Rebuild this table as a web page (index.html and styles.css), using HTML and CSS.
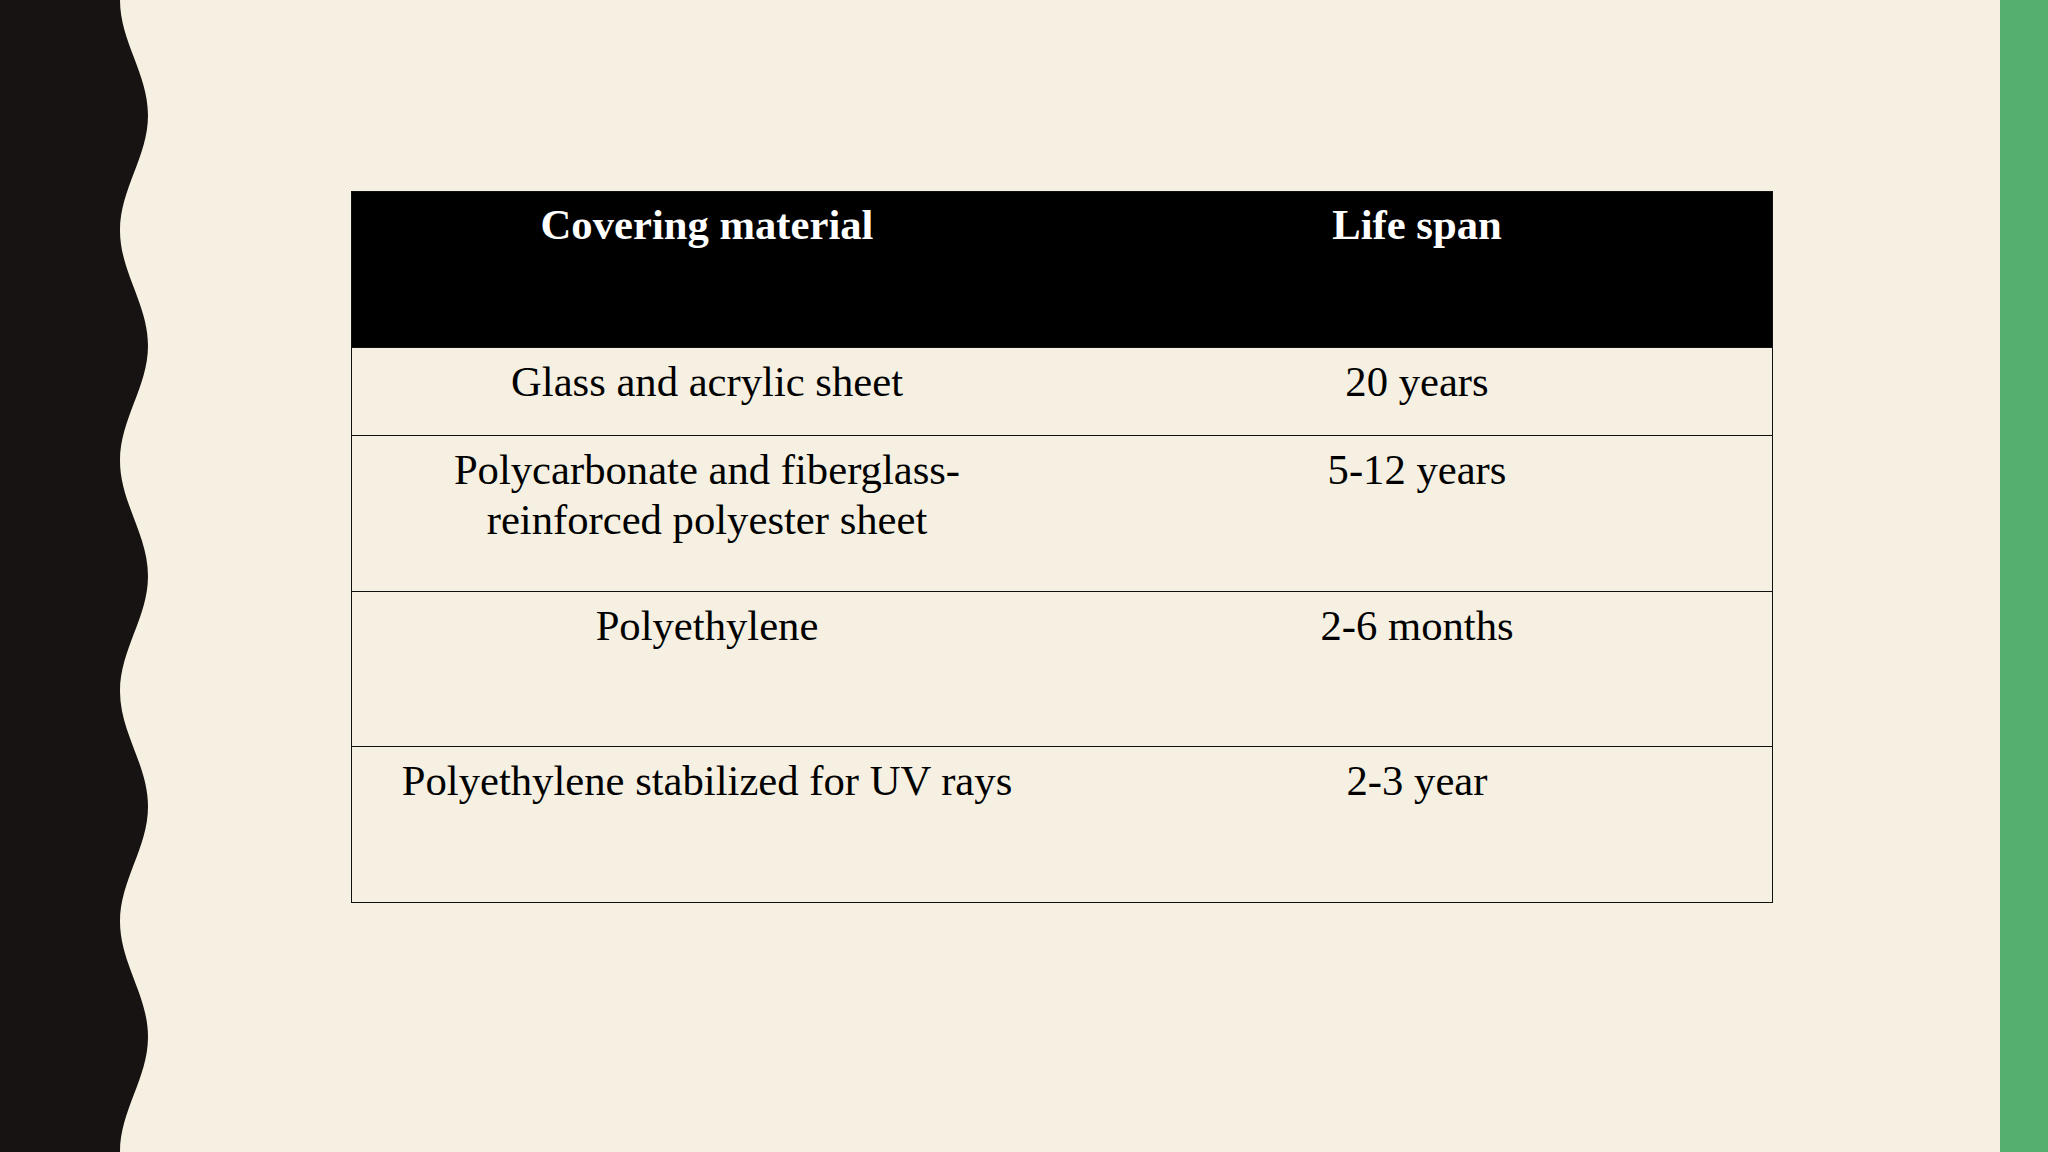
FILE: index.html
```html
<!DOCTYPE html>
<html lang="en">
<head>
<meta charset="utf-8">
<title>Covering material life span</title>
<link rel="stylesheet" href="styles.css">
</head>
<body>
<div class="slide">
  <svg class="wave" viewBox="0 0 150 1152" preserveAspectRatio="none" aria-hidden="true">
    <path d="M0,0 L120,0 C120,41.5 148,73.7 148,115.2 S120,188.9 120,230.4 S148,304.1 148,345.6 S120,419.3 120,460.8 S148,534.5 148,576 S120,649.7 120,691.2 S148,764.9 148,806.4 S120,880.1 120,921.6 S148,995.3 148,1036.8 S120,1110.5 120,1152 L0,1152 Z" fill="#171312"/>
  </svg>
  <main class="content">
    <table class="life-table">
      <thead>
        <tr class="row-head">
          <th>Covering material</th>
          <th>Life span</th>
        </tr>
      </thead>
      <tbody>
        <tr class="row-short">
          <td>Glass and acrylic sheet</td>
          <td>20 years</td>
        </tr>
        <tr class="row-tall">
          <td>Polycarbonate and fiberglass-<br>reinforced polyester sheet</td>
          <td>5-12 years</td>
        </tr>
        <tr class="row-tall">
          <td>Polyethylene</td>
          <td>2-6 months</td>
        </tr>
        <tr class="row-tall">
          <td>Polyethylene stabilized for UV rays</td>
          <td>2-3 year</td>
        </tr>
      </tbody>
    </table>
  </main>
  <div class="accent"></div>
</div>
</body>
</html>
```
FILE: styles.css
```css
html, body {
  margin: 0;
  padding: 0;
}
body {
  width: 2048px;
  height: 1152px;
  overflow: hidden;
  background: #f5f0e1;
  font-family: "Liberation Serif", "Times New Roman", serif;
}
.slide {
  display: flex;
  width: 2048px;
  height: 1152px;
}
.wave {
  flex: 0 0 150px;
  width: 150px;
  height: 1152px;
  display: block;
}
.content {
  flex: 1 1 auto;
  padding-top: 191px;
  padding-left: 201px;
  box-sizing: border-box;
}
.accent {
  flex: 0 0 48px;
  background: #55b06f;
}
.life-table {
  width: 1422px;
  table-layout: fixed;
  border-collapse: collapse;
  border: 1.5px solid #111;
  font-size: 42.67px;
  line-height: 1.18;
  color: #000;
}
.life-table th,
.life-table td {
  text-align: center;
  vertical-align: top;
  padding: 9px 12px 0;
  box-sizing: border-box;
}
.life-table th {
  background: #000;
  color: #fff;
  font-weight: bold;
  padding-top: 8px;
}
.life-table td {
  border-top: 1.5px solid #111;
}
.row-head th {
  height: 156px;
}
.row-short td {
  height: 88px;
}
.row-tall td {
  height: 155.5px;
}
```
